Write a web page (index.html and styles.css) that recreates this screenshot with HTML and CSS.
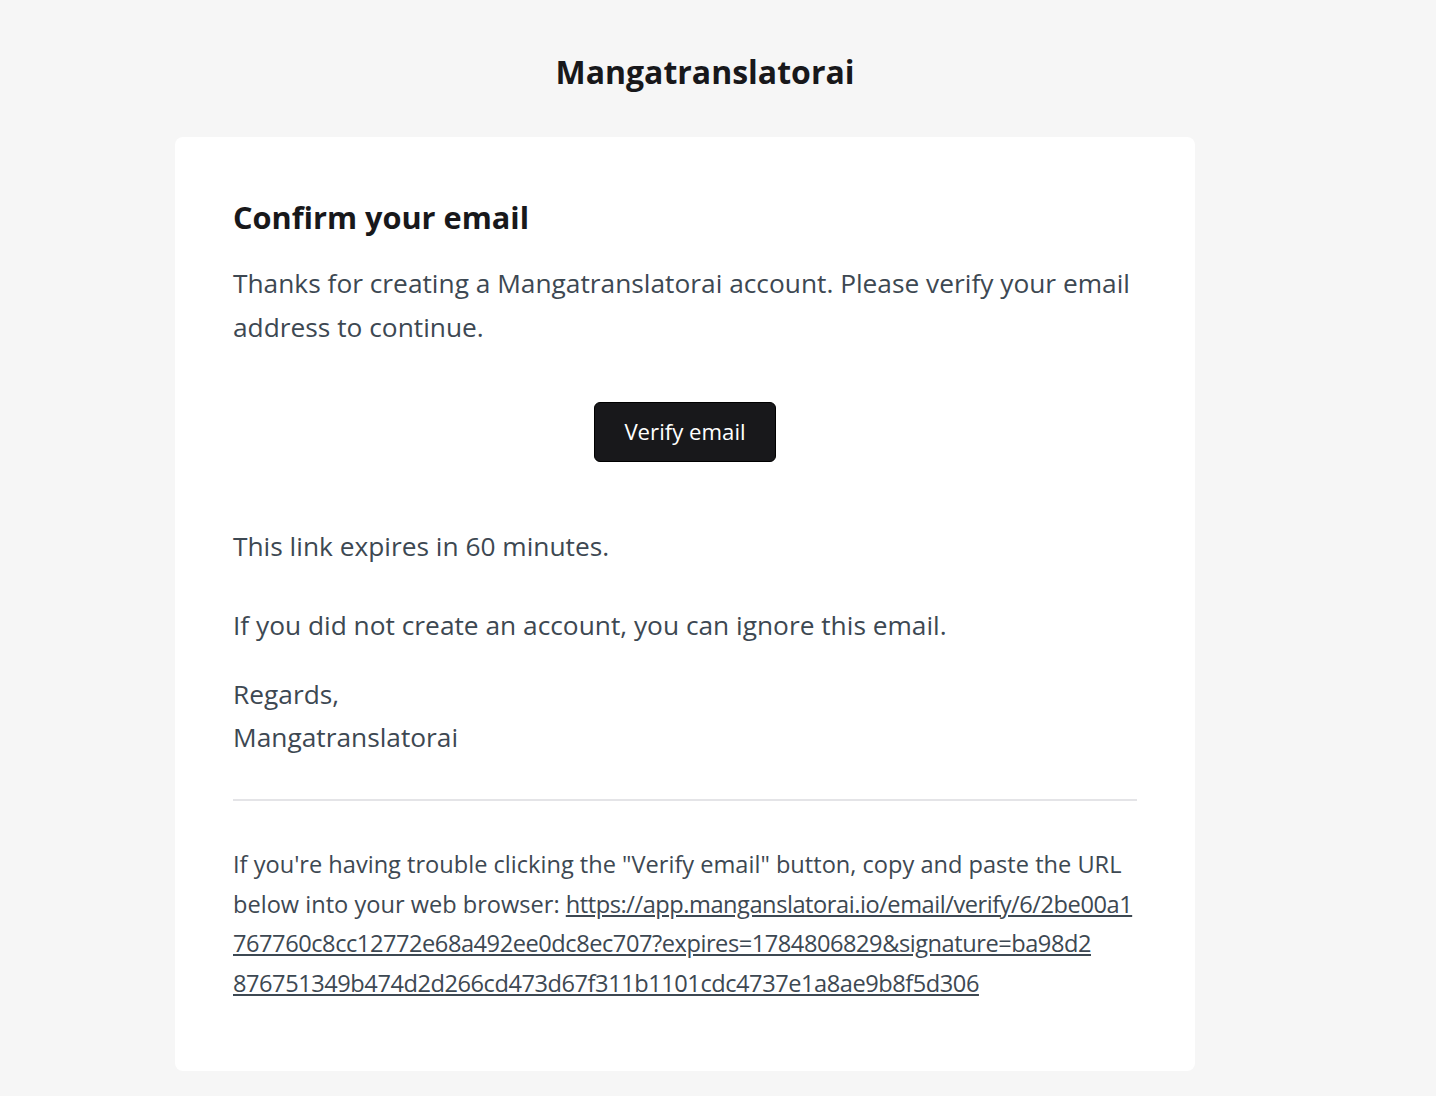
FILE: index.html
```html
<!DOCTYPE html>
<html lang="en">
<head>
  <meta charset="UTF-8">
  <meta name="viewport" content="width=device-width, initial-scale=1.0">
  <title>Confirm your email - Mangatranslatorai</title>
  <link rel="stylesheet" href="styles.css">
</head>
<body>

  <div class="wrapper">
    <div class="header">
      <a href="#" class="brand">Mangatranslatorai</a>
    </div>

    <!-- Email body -->
    <div class="card">
      <h1>Confirm your email</h1>
      <p>Thanks for creating a Mangatranslatorai account. Please verify your email address to continue.</p>

      <div class="action">
        <a href="#" class="button">Verify email</a>
      </div>

      <p>This link expires in 60 minutes.</p>
      <p class="ignore">If you did not create an account, you can ignore this email.</p>
      <p class="regards">Regards,<br>Mangatranslatorai</p>

      <div class="subcopy">
        <p>If you're having trouble clicking the "Verify email" button, copy and paste the URL below into your web browser: <a href="#" class="url">https://app.manganslatorai.io/email/verify/6/2be00a1<wbr>767760c8cc12772e68a492ee0dc8ec707?expires=1784806829&amp;signature=ba98d2<wbr>876751349b474d2d266cd473d67f311b1101cdc4737e1a8ae9b8f5d306</a></p>
      </div>
    </div>
  </div>

</body>
</html>
```

FILE: styles.css
```css
body {
  margin: 0;
  padding: 0;
  background: #f6f6f6;
  font-family: 'Open Sans', 'Noto Sans', sans-serif;
  color: #3d4852;
}

.wrapper {
  width: 1020px;
  margin-left: 175px;
}

.header {
  text-align: center;
  padding: 48px 0 41px 40px;
}

.brand {
  font-size: 32px;
  font-weight: bold;
  color: #18181b;
  text-decoration: none;
  line-height: 48px;
}

.card {
  background: #fff;
  border-radius: 8px;
  padding: 58px 58px 68px;
}

h1 {
  margin: 0 0 22px;
  font-size: 30.7px;
  font-weight: bold;
  color: #18181b;
  line-height: 44px;
}

p {
  margin: 0 0 35px;
  font-size: 26.3px;
  line-height: 44px;
}

.action {
  text-align: center;
  margin: 53px 0 62px;
}

.button {
  display: inline-block;
  background: #18181b;
  color: #fff;
  text-decoration: none;
  font-size: 22.2px;
  line-height: 28px;
  padding: 15px 29px;
  border: 1px solid #000;
  border-radius: 6px;
}

.ignore {
  margin-bottom: 26px;
}

.regards {
  line-height: 43px;
  margin-bottom: 40px;
}

.subcopy {
  border-top: 2px solid #e4e4e7;
  padding-top: 44px;
}

.subcopy p {
  margin: 0;
  font-size: 23.6px;
  line-height: 39.5px;
}

.url {
  color: #3d4852;
  letter-spacing: -0.45px;
  overflow-wrap: anywhere;
}
```
